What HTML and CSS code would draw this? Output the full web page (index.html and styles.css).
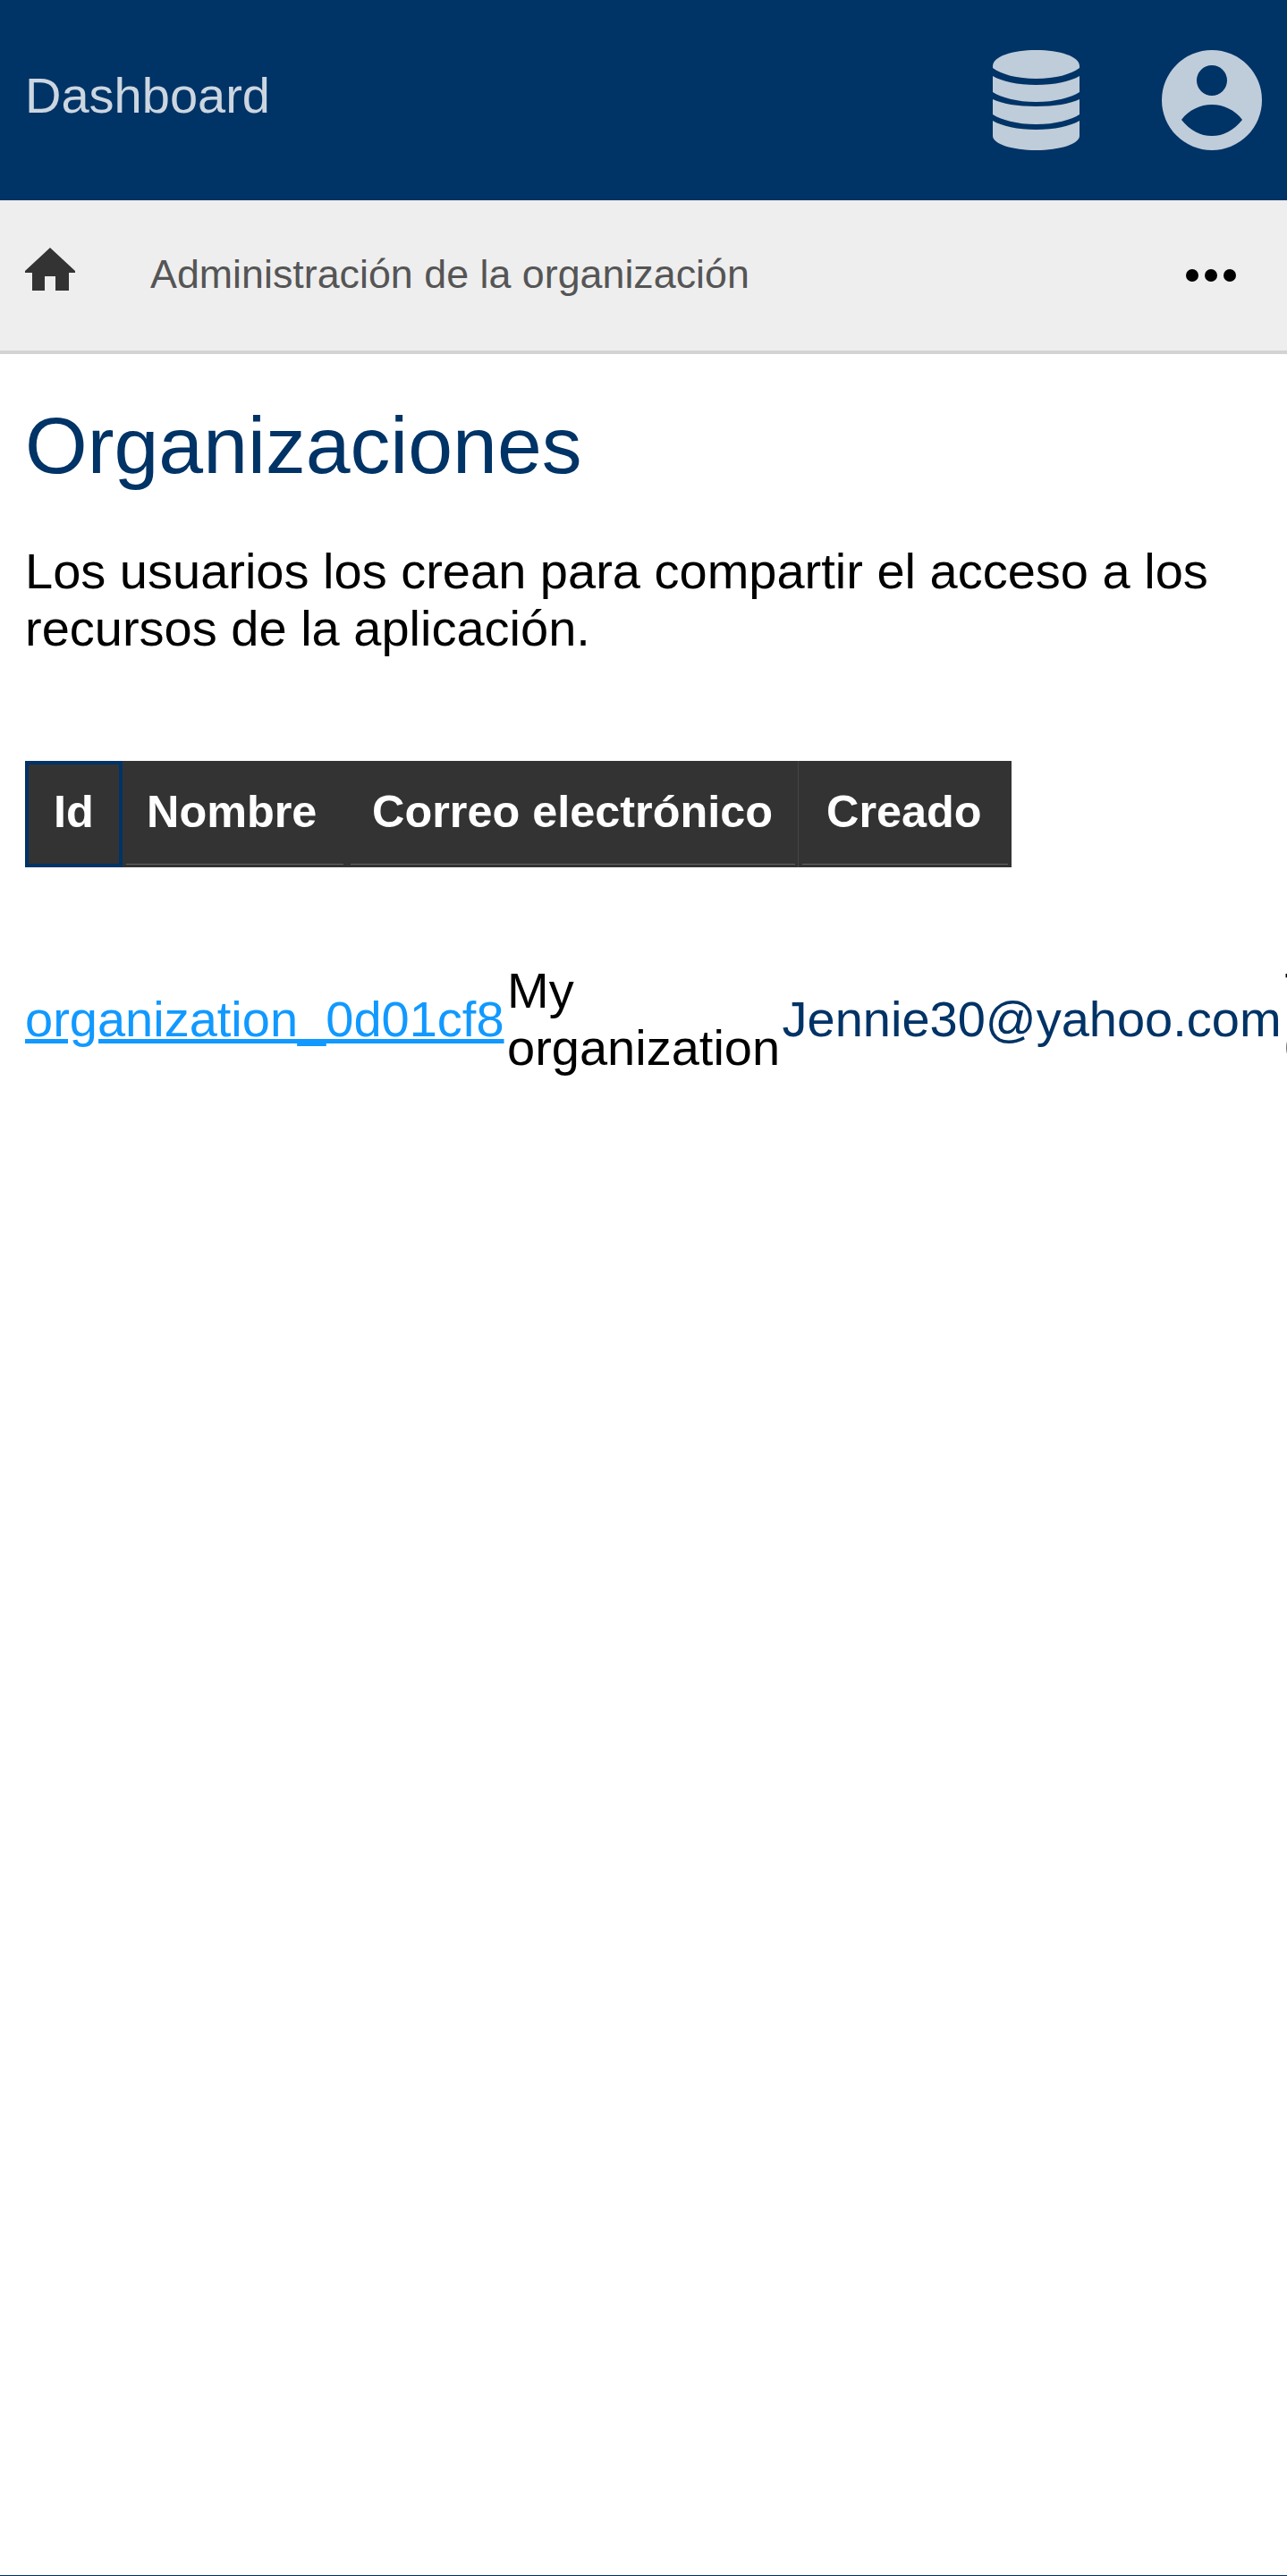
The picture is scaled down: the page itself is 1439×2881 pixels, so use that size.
FILE: index.html
```html
<!DOCTYPE html>
<html lang="es">
<head>
    <meta charset="UTF-8">
    <title>Organizaciones</title>
    <link rel="stylesheet" href="styles.css">
</head>
<body>
    <header class="topbar">
        <a class="brand" href="#">Dashboard</a>
        <div class="topbar-icons">
            <svg class="icon-db" viewBox="0 0 97 112" width="97" height="112" aria-hidden="true">
                <path d="M0 18C0 7 22 0 48.5 0S97 7 97 18V20C88 27 70 32 48.5 32S9 27 0 20Z"/>
                <path d="M0 29C10 35 28 39 48.5 39S87 35 97 29V47C88 53 70 58 48.5 58S9 53 0 47Z"/>
                <path d="M0 55C10 60 28 63 48.5 63S87 60 97 55V72C88 78 70 83 48.5 83S9 78 0 72Z"/>
                <path d="M0 79C10 85 28 89 48.5 89S87 85 97 79V96C97 105 75 112 48.5 112S0 105 0 96Z"/>
            </svg>
            <svg class="icon-user" viewBox="0 0 112 112" width="112" height="112" aria-hidden="true">
                <path fill-rule="evenodd" d="M56 0a56 56 0 1 0 0 112A56 56 0 0 0 56 0ZM56 17a17 17 0 1 1 0 34a17 17 0 0 1 0-34ZM22 78C30 67 43 61 56 61S82 67 90 78C80 90 69 96 56 96S32 90 22 78Z"/>
            </svg>
        </div>
    </header>

    <nav class="toolbar">
        <svg class="icon-home" viewBox="0 0 56 48" width="56" height="48" aria-hidden="true">
            <path d="M28 0L56 26V28H49V48H34V32H22V48H8V28H0V26Z"/>
        </svg>
        <span class="toolbar-title">Administración de la organización</span>
        <div class="dots"><i></i><i></i><i></i></div>
    </nav>

    <main class="content">
        <h1>Organizaciones</h1>
        <p class="lead">Los usuarios los crean para compartir el acceso a los recursos de la aplicación.</p>

        <div class="table-head">
            <div class="th th-id th-active">Id</div>
            <div class="th th-name">Nombre</div>
            <div class="th th-mail">Correo electrónico</div>
            <div class="th th-date">Creado</div>
        </div>

        <div class="table-row">
            <a class="cell-id" href="#">organization_0d01cf8</a>
            <div class="cell-name">My organization</div>
            <div class="cell-mail">Jennie30@yahoo.com</div>
            <div class="cell-date">Tue Mar 05 2024</div>
        </div>
    </main>
</body>
</html>
```

FILE: styles.css
```css
html, body {
    margin: 0;
    height: 100%;
}
body {
    font-family: "Liberation Sans", Arial, sans-serif;
    background: #fff;
    color: #000;
    overflow: hidden;
    box-sizing: border-box;
    height: 2881px;
    border-bottom: 1px solid #003366;
}
.topbar {
    height: 224px;
    background: #003366;
    display: flex;
    align-items: center;
    justify-content: space-between;
    padding: 0 28px;
}
.brand {
    color: #ccd6e0;
    font-size: 56px;
    text-decoration: none;
    margin-bottom: 12px;
}
.topbar-icons {
    display: flex;
    align-items: center;
    gap: 92px;
}
.topbar-icons svg {
    fill: #bfccd9;
    display: block;
}
.toolbar {
    height: 168px;
    background: #eee;
    border-bottom: 4px solid #d3d3d3;
    display: flex;
    align-items: center;
    padding: 0 57px 0 28px;
}
.icon-home {
    fill: #333;
    margin: 0 84px 14px 0;
    flex: none;
}
.toolbar-title {
    color: #555;
    font-size: 44.8px;
    margin-bottom: 3px;
}
.dots {
    margin-left: auto;
    display: flex;
    gap: 7px;
}
.dots i {
    width: 14px;
    height: 14px;
    border-radius: 50%;
    background: #000;
}
.content {
    padding: 0 0 0 28px;
}
h1 {
    margin: 52px 0 0;
    color: #003366;
    font-size: 89.6px;
    font-weight: normal;
    line-height: 100px;
}
.lead {
    margin: 59px 0 0;
    font-size: 56px;
    line-height: 64px;
    width: 1370px;
}
.table-head {
    display: inline-flex;
    margin-top: 116px;
    background: #333;
    height: 119px;
    color: #fff;
    font-size: 50.4px;
    font-weight: bold;
    vertical-align: top;
}
.th {
    flex: none;
    padding: 0 0 7px 28px;
    display: flex;
    align-items: center;
    box-sizing: border-box;
    /* thin rule under the label, inset from the cell edges */
    background: linear-gradient(#666, #666) no-repeat center bottom 3px / calc(100% - 8px) 1px;
    background-origin: border-box;
}
.th-id { width: 109px; }
.th-name {
    width: 251px;
    padding-left: 27px;
}
.th-mail {
    width: 505px;
    box-shadow: inset -1px 0 0 #444;
}
.th-date {
    width: 238px;
    padding-left: 31px;
}
.th-active {
    padding-left: 28px;
    border: 4px solid #003366;
}
.table-row {
    display: flex;
    align-items: center;
    margin-top: 106px;
    font-size: 56px;
    line-height: 64px;
    white-space: nowrap;
}
.table-row > * {
    flex: none;
    margin-right: 3.5px;
}
.cell-id {
    color: #1199ff;
}
.cell-name {
    white-space: normal;
    width: 304px;
}
.cell-mail {
    color: #003366;
}
.cell-date {
    white-space: normal;
    width: 220px;
}
```
